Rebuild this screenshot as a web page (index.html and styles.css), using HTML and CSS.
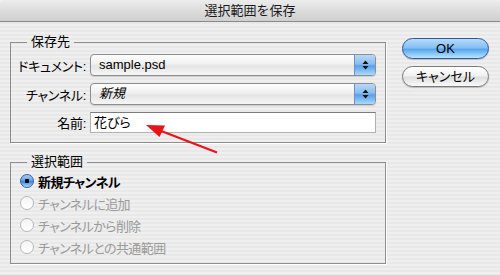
FILE: index.html
```html
<!DOCTYPE html>
<html lang="ja">
<head>
    <meta charset="UTF-8">
    <title>選択範囲を保存</title>
    <link rel="stylesheet" href="styles.css">
</head>
<body>
    <div class="titlebar">選択範囲を保存</div>

    <div class="dialog">
        <div class="groups">
            <fieldset class="group">
                <legend>保存先</legend>
                <div class="form">
                    <label>ドキュメント:</label>
                    <div class="popup">
                        <span class="popup-value">sample.psd</span>
                        <span class="stepper">
                            <svg width="7" height="10" viewBox="0 0 7 10"><path d="M3.5 0.5 L6.5 4 L0.5 4 Z M0.5 6 L6.5 6 L3.5 9.5 Z" fill="#111"/></svg>
                        </span>
                    </div>

                    <label>チャンネル:</label>
                    <div class="popup">
                        <span class="popup-value italic">新規</span>
                        <span class="stepper">
                            <svg width="7" height="10" viewBox="0 0 7 10"><path d="M3.5 0.5 L6.5 4 L0.5 4 Z M0.5 6 L6.5 6 L3.5 9.5 Z" fill="#111"/></svg>
                        </span>
                    </div>

                    <label>名前:</label>
                    <div class="textfield">花びら</div>
                </div>
            </fieldset>

            <fieldset class="group group-radios">
                <legend>選択範囲</legend>
                <div class="radios">
                    <div class="radio checked"><span class="bullet"></span>新規チャンネル</div>
                    <div class="radio disabled"><span class="bullet"></span>チャンネルに追加</div>
                    <div class="radio disabled"><span class="bullet"></span>チャンネルから削除</div>
                    <div class="radio disabled"><span class="bullet"></span>チャンネルとの共通範囲</div>
                </div>
            </fieldset>
        </div>

        <div class="buttons">
            <div class="button default">OK</div>
            <div class="button">キャンセル</div>
        </div>
    </div>

    <!-- annotation arrow pointing at the name field -->
    <svg class="arrow" width="500" height="275" viewBox="0 0 500 275">
        <line x1="217" y1="152.5" x2="158" y2="129.8" stroke="#e8141b" stroke-width="2.2"/>
        <path d="M146 125 L165 125.6 L159.5 137 Z" fill="#e8141b"/>
    </svg>
</body>
</html>
```

FILE: styles.css
```css
:root {
    --font: "Liberation Sans", "Noto Sans CJK JP", sans-serif;
    --group-line: #8d8d8d;
    --disabled: #9a9a9a;
}

html, body {
    margin: 0;
    padding: 0;
}

body {
    position: relative;
    width: 500px;
    height: 275px;
    overflow: hidden;
    font-family: var(--font);
    font-size: 13px;
    color: #000;
    font-feature-settings: "palt";
    background: repeating-linear-gradient(to bottom, #efefef 0, #efefef 2px, #e8e8e8 2px, #e8e8e8 4px);
}

.titlebar {
    height: 21px;
    line-height: 22px;
    text-align: center;
    font-feature-settings: normal;
    color: #1a1a1a;
    background: linear-gradient(to bottom, #ececec, #dadada 60%, #cfcfcf);
    border-bottom: 1px solid #8a8a8a;
    border-radius: 5px 5px 0 0;
}

.dialog {
    display: flex;
    align-items: flex-start;
    padding-left: 10px;
}

.groups {
    display: flex;
    flex-direction: column;
    gap: 11px;
    margin-top: 12px;
    width: 376px;
}

.group {
    margin: 0;
    padding: 0;
    border: 1px solid var(--group-line);
    box-shadow: 1px 1px 0 #fff;
    min-width: 0;
}

.group legend {
    margin-left: 16px;
    padding: 0 4px;
    line-height: 16px;
}

.form {
    display: grid;
    grid-template-columns: 75px 1fr;
    column-gap: 4px;
    row-gap: 7px;
    align-items: center;
    padding: 4px 9px 9px 0;
}

.form label {
    text-align: right;
    white-space: nowrap;
    letter-spacing: -0.3px;
}

.popup {
    display: flex;
    height: 22px;
    box-sizing: border-box;
    border: 1px solid #8e8e8e;
    border-radius: 4px;
    background: linear-gradient(to bottom, #fdfdfd, #f0f0f0 45%, #e4e4e4 55%, #f6f6f6);
    box-shadow: 0 1px 1px rgba(0, 0, 0, 0.15);
    overflow: hidden;
}

.popup-value {
    flex: 1;
    padding-left: 8px;
    line-height: 20px;
}

.italic {
    font-style: italic;
}

.stepper {
    display: flex;
    align-items: center;
    justify-content: center;
    width: 20px;
    border-left: 1px solid #6d8fc4;
    background: linear-gradient(to bottom, #b9d8f6, #8abdf0 45%, #5c9ee8 55%, #a6dcfb);
}

.textfield {
    height: 21px;
    box-sizing: border-box;
    padding-left: 3px;
    line-height: 19px;
    background: #fff;
    border: 1px solid #b0b0b0;
    border-top-color: #7c7c7c;
}

.radios {
    display: flex;
    flex-direction: column;
    padding: 0 0 5px 9px;
}

.radio {
    display: flex;
    align-items: center;
    gap: 4px;
    height: 22px;
    letter-spacing: -0.6px;
}

.radio.checked {
    font-weight: bold;
}

.radio.disabled {
    color: var(--disabled);
}

.bullet {
    flex: none;
    width: 14px;
    height: 14px;
    box-sizing: border-box;
    border-radius: 50%;
    border: 1px solid #b8b8b8;
    background: linear-gradient(to bottom, #f4f4f4, #fff);
}

.radio.checked .bullet {
    border-color: #3b5d9a;
    background:
        radial-gradient(circle at 50% 50%, #000 0, #000 2px, transparent 2.5px),
        linear-gradient(to bottom, #a7cff5, #5c9de6 50%, #3d84dc 55%, #a9e0fc);
}

.buttons {
    display: flex;
    flex-direction: column;
    gap: 7px;
    margin: 16px 0 0 16px;
    width: 87px;
}

.button {
    height: 21px;
    box-sizing: border-box;
    line-height: 19px;
    text-align: center;
    border: 1px solid #7a7a7a;
    border-radius: 11px;
    background: linear-gradient(to bottom, #ffffff, #f1f1f1 45%, #dedede 55%, #fafafa);
    box-shadow: 0 1px 1px rgba(0, 0, 0, 0.2);
}

.button.default {
    border-color: #33579a;
    background: linear-gradient(to bottom, #b6dbfb, #86c0f3 45%, #5aa6ed 55%, #b7e6ff);
}

.arrow {
    position: absolute;
    top: 0;
    left: 0;
    pointer-events: none;
}
```
